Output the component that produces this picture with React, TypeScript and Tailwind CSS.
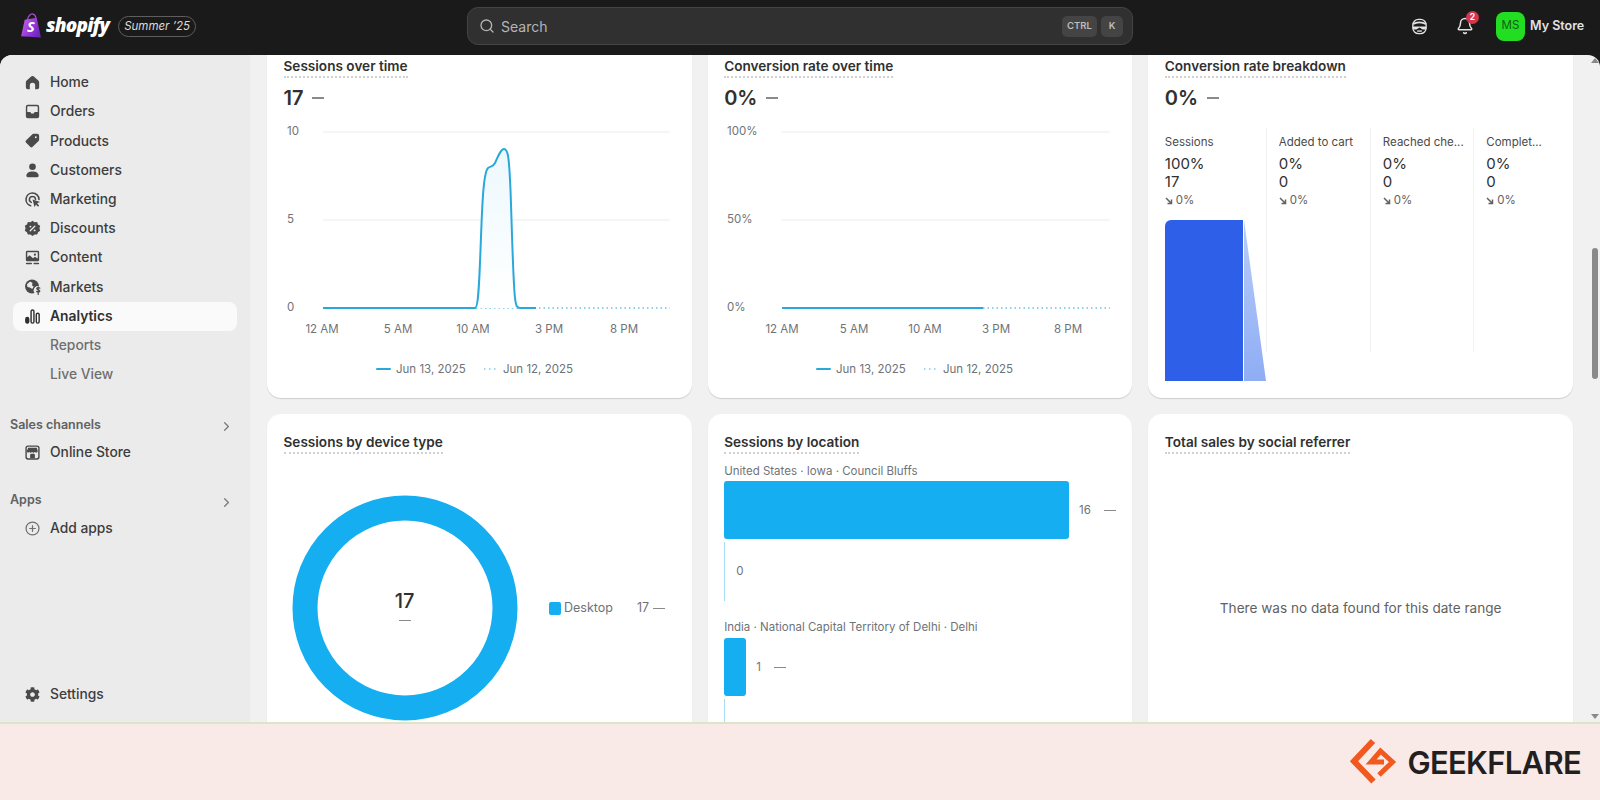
import React from "react";
import { Bell, ChevronRight, Search } from "lucide-react";
import { FaCog } from "react-icons/fa";

const I = ({ children }: { children: React.ReactNode }) => (
  <svg viewBox="0 0 20 20" className="w-[19px] h-[19px]" fill="#4a4a4a">{children}</svg>
);

const icons: Record<string, React.ReactNode> = {
  Home: <I><path d="M8.9 3.5a1.7 1.7 0 0 1 2.2 0l5 4.3c.6.5.9 1.2.9 2V15a2 2 0 0 1-2 2h-2.2v-4a2.8 2.8 0 0 0-5.6 0v4H5a2 2 0 0 1-2-2V9.8c0-.8.3-1.5.9-2z" /></I>,
  Orders: <I><path fillRule="evenodd" d="M5 3h10a2 2 0 0 1 2 2v10a2 2 0 0 1-2 2H5a2 2 0 0 1-2-2V5a2 2 0 0 1 2-2zM4.5 5a.5.5 0 0 1 .5-.5h10a.5.5 0 0 1 .5.5v5.5h-3.2l-1 1.5H8.7l-1-1.5H4.5z" /></I>,
  Products: <I><path fillRule="evenodd" d="M11 3h4a2 2 0 0 1 2 2v4c0 .5-.2 1-.6 1.4l-6.5 6.5a1.5 1.5 0 0 1-2.1 0l-4.7-4.7a1.5 1.5 0 0 1 0-2.1l6.5-6.5C9.9 3.2 10.5 3 11 3zm3.5 3.5a1 1 0 1 0-2 0 1 1 0 0 0 2 0z" /></I>,
  Customers: <I><circle cx="10" cy="6" r="3.5" /><path d="M3.5 15.5c0-3 3-4.500 6.500-4.500s6.500 1.500 6.500 4.500c0 1-.8 1.500-1.500 1.500H5c-.7 0-1.500-.5-1.500-1.500z" /></I>,
  Marketing: <I><path d="M10 3.200a6.800 6.800 0 0 0-2 13.300M16.800 10A6.800 6.800 0 0 0 10 3.200" fill="none" stroke="#4a4a4a" strokeWidth="1.700" strokeLinecap="round" /><path d="M10 6.800a3.200 3.200 0 0 0-1.200 6.200M13.200 10A3.200 3.200 0 0 0 10 6.800" fill="none" stroke="#4a4a4a" strokeWidth="1.600" strokeLinecap="round" /><path d="M10 10l8 2.600-3.200 1.400 2.200 2.400-1.200 1.100-2.200-2.300-1.400 3z" /></I>,
  Discounts: <I><path d="M10 1.800l2.200 1.600 2.700-.2.900 2.500 2.300 1.500-.8 2.600.8 2.600-2.300 1.500-.9 2.500-2.700-.2L10 18l-2.200-1.800-2.700.2-.9-2.500-2.300-1.500.8-2.600-.8-2.600 2.300-1.500.9-2.500 2.700.2z" /><path d="M7.600 12.400l4.800-4.800" stroke="#ebebeb" strokeWidth="1.400" strokeLinecap="round" /><circle cx="7.800" cy="8" r="1" fill="#ebebeb" /><circle cx="12.200" cy="12" r="1" fill="#ebebeb" /></I>,
  Content: <I><path fillRule="evenodd" d="M4.500 3h11A1.500 1.500 0 0 1 17 4.500v8a1.500 1.500 0 0 1-1.500 1.500h-11A1.500 1.500 0 0 1 3 12.500v-8A1.500 1.500 0 0 1 4.500 3zm0 1.500v5.200l2.500-2 3.500 3 2-1.500 3 1.800V4.500z" /><circle cx="12.500" cy="7" r="1.200" /><rect x="3" y="15.600" width="6.500" height="1.500" rx=".7" /><rect x="11" y="15.600" width="6" height="1.500" rx=".7" /></I>,
  Markets: <I><circle cx="9.500" cy="10" r="7.300" /><path d="M4.200 7.500l3.300-2.800 2.500 1.600-.5 2.600 1.800 1-1.600 2.600-2.500-1.500-2.500-.5z" fill="#ebebeb" /><circle cx="15.800" cy="14" r="4.600" fill="#ebebeb" /><path d="M17.700 11.800c-.5-.7-2.900-.9-3.200.4-.3 1.500 3.400 1.100 3.200 2.700-.2 1.400-2.700 1.300-3.400.3M16 10.300v8" fill="none" stroke="#4a4a4a" strokeWidth="1.300" strokeLinecap="round" /></I>,
  Analytics: <svg viewBox="0 0 20 20" className="w-[19px] h-[19px]" fill="none" stroke="#303030" strokeWidth="1.500"><rect x="3" y="11" width="3" height="6" rx="1.500" fill="#303030" /><rect x="8.500" y="3.200" width="3" height="13.800" rx="1.500" /><rect x="14" y="6.500" width="3" height="10.500" rx="1.500" /></svg>,
  OnlineStore: <I><rect x="2.500" y="2.500" width="15" height="15" rx="2.800" /><rect x="4" y="4" width="12" height="12" rx="1.500" fill="#ebebeb" /><path d="M5.500 5h9l1 3.500c0 2-2.500 2-3 .7-.5 1.300-2.500 1.300-3 0-.5 1.300-2.500 1.300-3 0-.5 1.300-2.500 1.300-2.500-.7z" /><path d="M7.500 16v-3.500A1.200 1.200 0 0 1 8.700 11.300h2.600a1.200 1.200 0 0 1 1.200 1.200V16z" /></I>,
  AddApps: <svg viewBox="0 0 20 20" className="w-[19px] h-[19px]" fill="none" stroke="#6f6f6f" strokeWidth="1.300" strokeLinecap="round"><circle cx="10" cy="10" r="6.800" /><path d="M10 7v6M7 10h6" /></svg>,
  Settings: <FaCog size={15} color="#4a4a4a" />,
};

const Nav = ({ icon, label, active, sub }: { icon?: string; label: string; active?: boolean; sub?: boolean }) => (
  <div className={`h-[29.2px] flex items-center rounded-lg mx-[13px] text-[13.8px] ${active ? "bg-[#fafafa] font-semibold text-[#303030]" : sub ? "text-[#6f6f6f]" : "text-[#3d3d3d]"}`}>
    <span className="w-[37px] flex justify-center pl-[1px] shrink-0">{icon && icons[icon]}</span>
    <span>{label}</span>
  </div>
);

const Sect = ({ label }: { label: string }) => (
  <div className="h-[26px] flex items-center justify-between pl-[10px] pr-[16px] text-[12.5px] font-semibold text-[#616161]">
    <span>{label}</span>
    <ChevronRight size={15} color="#7a7a7a" className="mt-[3px]" />
  </div>
);

const Title = ({ t }: { t: string }) => (
  <div className="flex">
    <span className="text-[13.6px] leading-[19px] font-semibold text-[#303030] border-b-2 border-dotted border-[#d0d0d0]">{t}</span>
  </div>
);

const Value = ({ v }: { v: string }) => (
  <div className="flex items-center gap-[9px] h-[28px] mt-[6px]">
    <span className="text-[20px] font-semibold text-[#303030]">{v}</span>
    <span className="w-[12px] h-[1.500px] bg-[#8a8a8a]" />
  </div>
);

const Card = ({ children, className = "" }: { children: React.ReactNode; className?: string }) => (
  <div className={`bg-white rounded-[14px] h-[360px] px-[16.5px] pt-[19px] shadow-[0_1px_1px_rgba(0,0,0,0.15)] ${className}`}>{children}</div>
);

const BLUE = "#2aa8dc";

function Chart({ yl, solidEnd, xs, gridL, gridR, curve, legend }: { yl: string[]; solidEnd: number; xs: number[]; gridL: number; gridR: number; curve?: boolean; legend: number }) {
  const ly = [12, 100, 188];
  const xl = ["12 AM", "5 AM", "10 AM", "3 PM", "8 PM"];
  const tx = { fontFamily: "Inter, sans-serif", fontSize: 11.500, fill: "#6f7378" };
  return (
    <svg width="392" height="265" className="block mt-2">
      <defs>
        <linearGradient id="fl" x1="0" y1="0" x2="0" y2="1">
          <stop offset="0" stopColor="#edf8fd" />
          <stop offset="1" stopColor="#ffffff" />
        </linearGradient>
      </defs>
      {ly.slice(0, 2).map((y) => <line key={y} x1={gridL} x2={gridR} y1={y} y2={y} stroke="#ececec" />)}
      {yl.map((t, i) => <text key={t} x="3" y={ly[i] + 3} {...tx}>{t}</text>)}
      {xl.map((t, i) => <text key={t} x={xs[i]} y="213" textAnchor="middle" {...tx}>{t}</text>)}
      <line x1={curve ? 192 : solidEnd} x2={gridR} y1="188" y2="188" stroke={BLUE} strokeOpacity=".7" strokeWidth="1.500" strokeDasharray="1.500 3" />
      {curve && <path d="M191 188C194 188 195 170 196.500 130C198 90 199 53 204 48C207 46 209 47 211 43C214 36 217 29 220 29C224 29 225 36 226.500 70C228 110 229 160 231 178C232 186 233 188 236 188z" fill="url(#fl)" />}
      <path d={curve ? "M39 188L191 188C194 188 195 170 196.500 130C198 90 199 53 204 48C207 46 209 47 211 43C214 36 217 29 220 29C224 29 225 36 226.500 70C228 110 229 160 231 178C232 186 233 188 236 188L252 188" : `M${gridL} 188L${solidEnd} 188`} fill="none" stroke={BLUE} strokeWidth="2" />
      <line x1={legend} x2={legend + 13} y1="249" y2="249" stroke={BLUE} strokeWidth="2" strokeLinecap="round" />
      <text x={legend + 19} y="253" {...tx}>Jun 13, 2025</text>
      <line x1={legend + 107} x2={legend + 120} y1="249" y2="249" stroke={BLUE} strokeOpacity=".6" strokeWidth="1.500" strokeDasharray="1.500 3.500" />
      <text x={legend + 126} y="253" {...tx}>Jun 12, 2025</text>
    </svg>
  );
}

const Arrow = () => (
  <svg viewBox="0 0 8 8" className="w-[8px] h-[8px]" fill="none" stroke="#616161" strokeWidth="1.500"><path d="M1 1l5 5M6.500 2.500v4h-4" /></svg>
);

const Funnel = ({ label, pct, n, last, children }: { label: string; pct: string; n: string; last?: boolean; children?: React.ReactNode }) => (
  <div className={`pt-[5px] ${last ? "" : "border-r border-[#f2f2f2]"} h-[224px] px-[12px] first:pl-0 overflow-visible`}>
    <div className="text-[11.500px] leading-[18px] text-[#4a4a4a] whitespace-nowrap">{label}</div>
    <div className="text-[15px] leading-[17.500px] text-[#303030] mt-[4px]">{pct}</div>
    <div className="text-[15px] leading-[17.500px] text-[#303030]">{n}</div>
    <div className="flex items-center gap-[3px] text-[11.500px] text-[#616161] h-[19px] mt-[1px]"><Arrow />0%</div>
    {children}
  </div>
);

const Dash = () => <span className="inline-block w-[12px] h-[1.500px] bg-[#8a8a8a]" />;

const Bar = ({ w, n }: { w: number; n: string }) => (
  <div className="flex items-center h-[59px]">
    <div className="h-[58px] bg-[#14aef1] rounded-[3px]" style={{ width: w }} />
    <span className="ml-[10px] mt-[2px] text-[11.500px] text-[#6f7378]">{n}</span>
    <span className="ml-[13px] mt-[2px] flex"><Dash /></span>
  </div>
);

const Zero = ({ h = 59, label = true }: { h?: number; label?: boolean }) => (
  <div className="flex items-center border-l border-[#a9dcf5] mt-[3px] ml-0" style={{ height: h }}>
    {label && <span className="ml-[11px] text-[11.500px] text-[#6f7378]">0</span>}
  </div>
);

export default function App() {
  return (
    <div className="w-[1600px] h-[800px] overflow-hidden flex flex-col bg-[#1a1a1a] font-['Inter',sans-serif] text-[14px]">
      <header className="h-[55px] shrink-0 flex items-center relative text-white pb-[3px]">
        <div className="flex items-center w-[467px] pl-[21px]">
          <svg viewBox="0 0 20 24" className="w-[21px] h-[25px] mb-[2px]">
            <defs>
              <linearGradient id="bag" x1="0" y1="0" x2="1" y2="0.6">
                <stop offset="0" stopColor="#c56bec" />
                <stop offset="0.5" stopColor="#a13fdc" />
                <stop offset="1" stopColor="#6f27c4" />
              </linearGradient>
            </defs>
            <path d="M6 7C6.500 3 9 .5 11.500 1c1.500.3 2.500 2 2.700 3.700" fill="none" stroke="#b14fd8" strokeWidth="1.200" />
            <path d="M3.500 6.500L15 4.500l4 19-19-1.200z" fill="url(#bag)" />
            <text x="9.500" y="18.500" textAnchor="middle" fontSize="14" fontWeight="700" fontStyle="italic" fill="#fff" fontFamily="'Open Sans',sans-serif">S</text>
          </svg>
          <span className="ml-[4px] font-['Open_Sans',sans-serif] italic font-extrabold text-[19px] tracking-[-0.800px] mb-[2px]">shopify</span>
          <span className="ml-[9px] h-[21px] px-[5px] rounded-full border border-[#5e5e5e] italic text-[11.500px] leading-[19px] text-[#dcdcdc] whitespace-nowrap">Summer ’25</span>
        </div>
        <div className="w-[666px] h-[38px] rounded-[11px] bg-[#303030] border border-[#444] flex items-center pl-[11px] pr-[9px]">
          <Search size={16} color="#b5b5b5" />
          <span className="ml-[6px] text-[#b5b5b5] text-[14px]">Search</span>
          <span className="ml-auto h-[21px] w-[35px] rounded-[5px] bg-[#444] text-[#bdbdbd] text-[9.500px] font-semibold flex items-center justify-center">CTRL</span>
          <span className="ml-[4px] h-[21px] w-[22px] rounded-[5px] bg-[#444] text-[#bdbdbd] text-[9.500px] font-semibold flex items-center justify-center">K</span>
        </div>
        <div className="flex-1 flex items-center">
          <svg viewBox="0 0 20 20" className="ml-[277px] w-[19px] h-[19px]" fill="none" stroke="#e3e3e3" strokeWidth="1.400">
            <rect x="3" y="2.500" width="14" height="15" rx="6" />
            <path d="M3.500 7.500c3-2.500 10-2.500 13 0" strokeWidth="1.800" />
            <path d="M3 10h14v2.500c-2 1-3.500 1-4.500 0L10 11l-2.500 1.500c-1 1-2.500 1-4.500 0z" fill="#e3e3e3" stroke="none" />
            <path d="M7.500 14.800h5" />
          </svg>
          <span className="relative ml-[27px] flex">
            <Bell size={18} color="#e3e3e3" />
            <span className="absolute -top-[6px] -right-[5px] w-[13px] h-[13px] rounded-full bg-[#d8344a] text-white text-[8.500px] font-bold flex items-center justify-center">2</span>
          </span>
          <span className="ml-[22px] w-[29px] h-[29px] rounded-[8px] bg-[#22dd22] text-[#0e5f12] text-[11.500px] flex items-center justify-center">MS</span>
          <span className="ml-[5px] text-[12.500px] font-semibold text-[#e3e3e3] whitespace-nowrap">My Store</span>
        </div>
      </header>

      <div className="flex-1 min-h-0 flex rounded-t-[12px] overflow-hidden bg-[#f1f1f1]">
        <aside className="w-[250px] shrink-0 bg-[#ebebeb] pt-[13px] pb-[13px] flex flex-col font-medium">
          <Nav icon="Home" label="Home" />
          <Nav icon="Orders" label="Orders" />
          <Nav icon="Products" label="Products" />
          <Nav icon="Customers" label="Customers" />
          <Nav icon="Marketing" label="Marketing" />
          <Nav icon="Discounts" label="Discounts" />
          <Nav icon="Content" label="Content" />
          <Nav icon="Markets" label="Markets" />
          <Nav icon="Analytics" label="Analytics" active />
          <Nav label="Reports" sub />
          <Nav label="Live View" sub />
          <div className="mt-[23px]"><Sect label="Sales channels" /></div>
          <Nav icon="OnlineStore" label="Online Store" />
          <div className="mt-[20.500px]"><Sect label="Apps" /></div>
          <div className="text-[#5e5e5e]"><Nav icon="AddApps" label="Add apps" /></div>
          <div className="mt-auto"><Nav icon="Settings" label="Settings" /></div>
        </aside>

        <main className="flex-1 min-w-0 overflow-hidden pl-[17px] pr-[17px]">
          <div className="-mt-[17px] grid grid-cols-3 gap-4">
            <Card>
              <Title t="Sessions over time" />
              <Value v="17" />
              <Chart yl={["10", "5", "0"]} solidEnd={252} xs={[38, 114, 189, 265, 340]} gridL={39} gridR={386} curve legend={93} />
            </Card>
            <Card>
              <Title t="Conversion rate over time" />
              <Value v="0%" />
              <Chart yl={["100%", "50%", "0%"]} solidEnd={259} xs={[58, 130, 201, 272, 344]} gridL={58} gridR={386} legend={93} />
            </Card>
            <Card>
              <Title t="Conversion rate breakdown" />
              <Value v="0%" />
              <div className="grid grid-cols-[102px_104px_103.500px_1fr] mt-[16px]">
                <Funnel label="Sessions" pct="100%" n="17">
                  <div className="flex mt-[10px] h-[161px] w-[102px]">
                    <div className="w-[78px] bg-[#2e5fe8] rounded-tl-[6px]" />
                    <svg width="23" height="161" className="ml-[1px] block">
                      <defs>
                        <linearGradient id="tr" x1="0" y1="0" x2="0" y2="1">
                          <stop offset="0" stopColor="#b9cdf9" />
                          <stop offset="1" stopColor="#8fadf4" />
                        </linearGradient>
                      </defs>
                      <path d="M0 0L22 161H0z" fill="url(#tr)" />
                    </svg>
                  </div>
                </Funnel>
                <Funnel label="Added to cart" pct="0%" n="0" />
                <Funnel label="Reached che..." pct="0%" n="0" />
                <Funnel label="Complet..." pct="0%" n="0" last />
              </div>
            </Card>
            <Card>
              <Title t="Sessions by device type" />
              <div className="flex items-center mt-[41px] ml-[8px]">
                <div className="relative w-[226px] h-[226px] shrink-0">
                  <svg viewBox="0 0 226 226" className="w-full h-full">
                    <circle cx="113" cy="113" r="100" fill="none" stroke="#14aef1" strokeWidth="25" />
                  </svg>
                  <div className="absolute inset-0 flex flex-col items-center justify-center pb-[7px]">
                    <span className="text-[20px] font-medium text-[#303030] leading-[26px]">17</span>
                    <span className="mt-[6px] flex"><Dash /></span>
                  </div>
                </div>
                <div className="ml-[31px] mt-[1px] flex items-center text-[12.500px] text-[#6f7378]">
                  <span className="w-[12.500px] h-[12.500px] rounded-[2px] bg-[#14aef1]" />
                  <span className="ml-[3px]">Desktop</span>
                  <span className="ml-[24px]">17</span>
                  <span className="ml-[4px] flex"><Dash /></span>
                </div>
              </div>
            </Card>
            <Card>
              <Title t="Sessions by location" />
              <div className="text-[11.500px] leading-[16px] text-[#6f7378] mt-[9px] mb-[1px]">United States · Iowa · Council Bluffs</div>
              <Bar w={345} n="16" />
              <Zero />
              <div className="text-[11.500px] leading-[16px] text-[#6f7378] mt-[18px] mb-[2px]">India · National Capital Territory of Delhi · Delhi</div>
              <Bar w={22} n="1" />
              <Zero h={30} label={false} />
            </Card>
            <Card className="flex flex-col">
              <Title t="Total sales by social referrer" />
              <div className="text-center text-[13.600px] text-[#616161] mt-[144px]">There was no data found for this date range</div>
            </Card>
          </div>
        </main>

        <div className="w-[10px] shrink-0 flex flex-col items-center pt-[3px] pb-[3px]">
          <span className="w-0 h-0 border-x-[4px] border-x-transparent border-b-[5px] border-b-[#8a8a8a]" />
          <span className="w-[6px] h-[131px] mt-[185px] rounded-full bg-[#8a8a8a]" />
          <span className="mt-auto w-0 h-0 border-x-[4px] border-x-transparent border-t-[5px] border-t-[#8a8a8a]" />
        </div>
      </div>

      <footer className="h-[78px] shrink-0 bg-[#f9eae7] border-t-2 border-[#dce5c8] flex items-center justify-end pr-[19px]">
        <svg viewBox="0 0 60 60" className="w-[60px] h-[60px]" fill="none" stroke="#f1591f">
          <path d="M30 9L11 29.300L30.500 49.500" strokeWidth="6" />
          <path d="M36 43L49.500 30L37.500 19L28 30L41 30" strokeWidth="5" />
        </svg>
        <span className="ml-[4px] text-[31px] font-semibold text-[#231f20] tracking-[-0.700px] leading-none">GEEKFLARE</span>
      </footer>
    </div>
  );
}
